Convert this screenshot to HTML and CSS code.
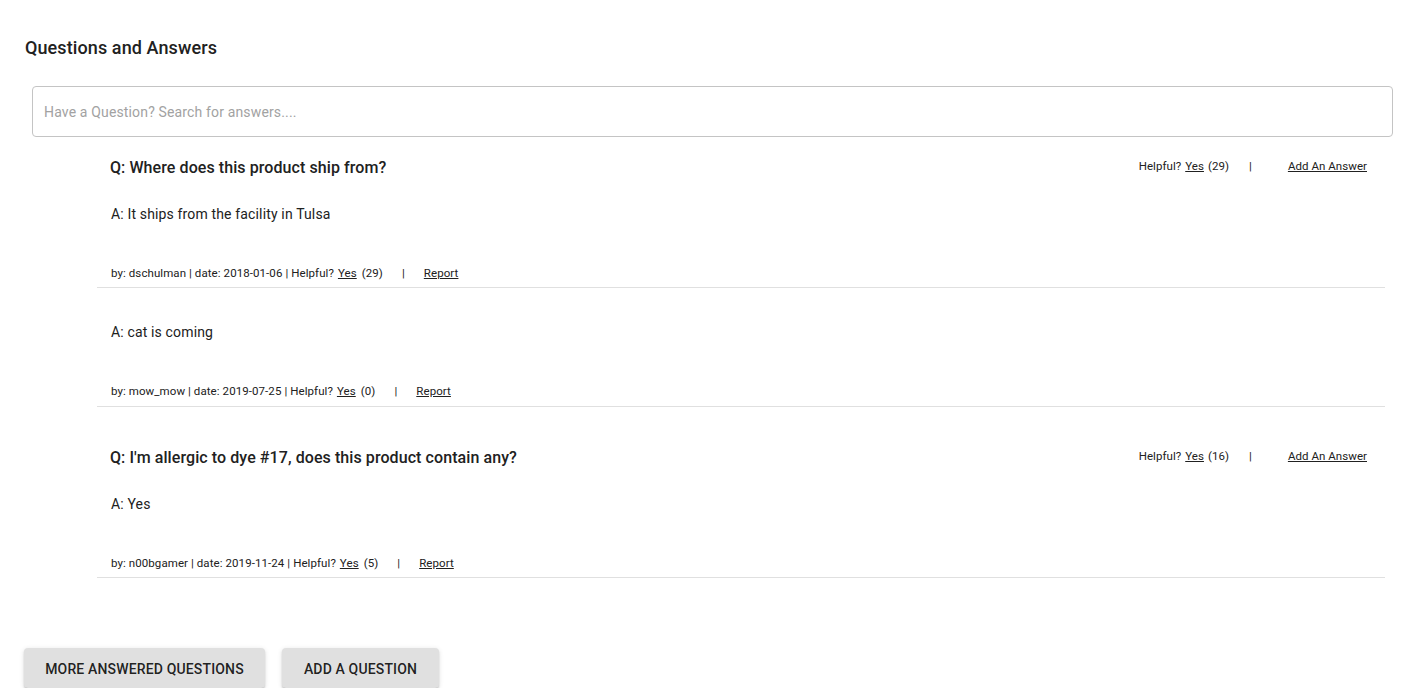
FILE: index.html
```html
<!DOCTYPE html>
<html>
<head>
<meta charset="utf-8">
<link rel="stylesheet" href="styles.css">
</head>
<body>
<div class="page">
  <h2 class="title">Questions and Answers</h2>
  <div class="search">
    <input class="search-input" type="text" placeholder="Have a Question? Search for answers....">
  </div>
  <div class="qa-list">
    <div class="qa-item">
      <div class="q-head">
        <div class="q-text">Q: Where does this product ship from?</div>
        <div class="q-actions">
          <span>Helpful?</span><a class="link yes">Yes</a><span>(29)</span><span class="sep">|</span><a class="link add">Add An Answer</a>
        </div>
      </div>
      <div class="answer">
        <div class="a-text">A: It ships from the facility in Tulsa</div>
        <div class="a-meta">by: dschulman | date: 2018-01-06 | Helpful? <a class="link yes">Yes</a><span>(29)</span><span class="sep">|</span><a class="link">Report</a></div>
      </div>
      <div class="answer">
        <div class="a-text">A: cat is coming</div>
        <div class="a-meta">by: mow_mow | date: 2019-07-25 | Helpful? <a class="link yes">Yes</a><span>(0)</span><span class="sep">|</span><a class="link">Report</a></div>
      </div>
    </div>
    <div class="qa-item">
      <div class="q-head">
        <div class="q-text">Q: I'm allergic to dye #17, does this product contain any?</div>
        <div class="q-actions">
          <span>Helpful?</span><a class="link yes">Yes</a><span>(16)</span><span class="sep">|</span><a class="link add">Add An Answer</a>
        </div>
      </div>
      <div class="answer">
        <div class="a-text">A: Yes</div>
        <div class="a-meta">by: n00bgamer | date: 2019-11-24 | Helpful? <a class="link yes">Yes</a><span>(5)</span><span class="sep">|</span><a class="link">Report</a></div>
      </div>
    </div>
  </div>
  <div class="buttons">
    <button class="btn btn-more">More Answered Questions</button>
    <button class="btn btn-add">Add a Question</button>
  </div>
</div>
</body>
</html>
```

FILE: styles.css
```css
* { box-sizing: border-box; }
html, body { margin: 0; padding: 0; background: #fff; }
body {
  font-family: Roboto, "Liberation Sans", Arial, sans-serif;
  color: rgba(0, 0, 0, 0.87);
}
.page {
  padding: 36px 0 0 0;
  width: 1412px;
}
.title {
  margin: 0 0 0 25px;
  font-size: 18px;
  font-weight: 500;
  line-height: 24px;
  letter-spacing: 0.1px;
  color: #212121;
}
.search {
  margin: 26px 0 0 32px;
  width: 1361px;
}
.search-input {
  display: block;
  width: 100%;
  height: 51px;
  border: 1px solid #c4c4c4;
  border-radius: 4px;
  padding: 0 11px;
  font-family: Roboto, "Liberation Sans", Arial, sans-serif;
  font-size: 14px;
  letter-spacing: 0.15px;
  color: #333;
  outline: none;
}
.search-input::placeholder { color: #a2a2a2; }
.qa-list {
  margin: 18px 0 0 97px;
  width: 1288px;
}
.qa-item + .qa-item { margin-top: 38px; }
.q-head {
  display: flex;
  justify-content: space-between;
  align-items: center;
  height: 24px;
  padding: 0 18px 0 13px;
}
.q-text {
  font-size: 16px;
  font-weight: 500;
  letter-spacing: 0.08px;
  color: #212121;
}
.q-actions {
  display: flex;
  align-items: center;
  font-size: 11.5px;
  letter-spacing: 0.05px;
  color: #212121;
  margin-top: -3px;
}
.q-actions .yes { margin-left: 4px; margin-right: 4px; }
.sep { margin: 0 19px 0 19px; }
.q-actions .sep { margin: 0 36px 0 20px; }
.link {
  text-decoration: underline;
  color: #212121;
  cursor: pointer;
}
.answer {
  padding: 34px 0 6px 14px;
  border-bottom: 1px solid #e0e0e0;
}
.answer + .answer { padding-bottom: 7px; }
.q-head + .answer { padding-top: 25px; }
.a-text {
  font-size: 14px;
  line-height: 20px;
  letter-spacing: 0.15px;
  color: #212121;
}
.a-meta {
  margin-top: 41px;
  font-size: 11.5px;
  line-height: 16px;
  letter-spacing: 0.08px;
  color: #212121;
}
.a-meta .yes { margin-left: 1px; margin-right: 5px; }
.buttons {
  display: flex;
  gap: 17px;
  margin: 70px 0 0 24px;
}
.btn {
  height: 40px;
  border: none;
  border-radius: 4px;
  background: #e0e0e0;
  box-shadow: 0 3px 1px -2px rgba(0,0,0,0.2), 0 2px 2px 0 rgba(0,0,0,0.14), 0 1px 5px 0 rgba(0,0,0,0.12);
  font-family: Roboto, "Liberation Sans", Arial, sans-serif;
  font-size: 14px;
  font-weight: 500;
  letter-spacing: 0.15px;
  text-transform: uppercase;
  white-space: nowrap;
  color: rgba(0,0,0,0.87);
  padding: 1px 0 0;
}
.btn-more { width: 241px; }
.btn-add { width: 157px; }
```
